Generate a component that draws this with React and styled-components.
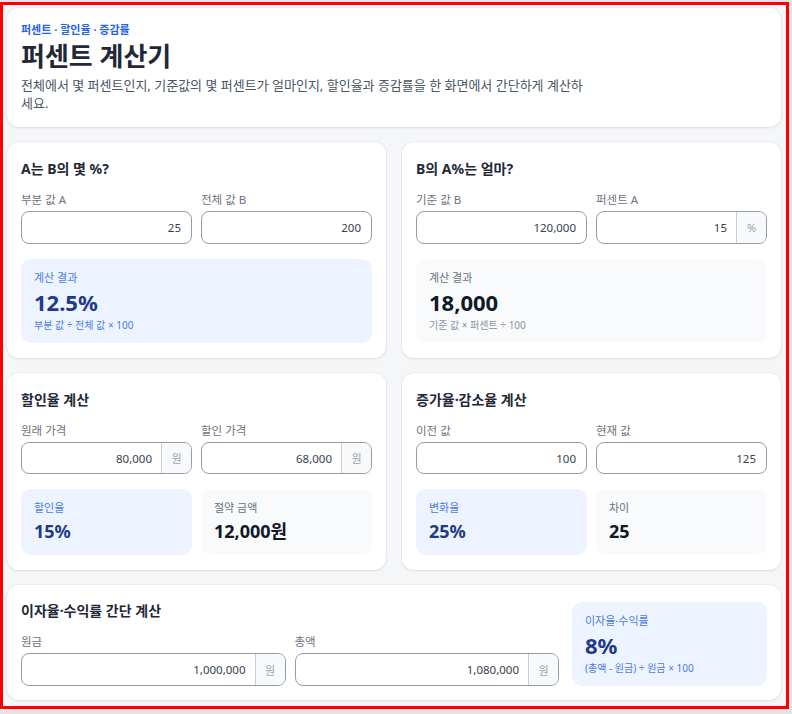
import styled, { createGlobalStyle } from "styled-components";

const GlobalStyle = createGlobalStyle`
  html, body {
    margin: 0;
    padding: 0;
    background: #e4e4e4;
  }
  body {
    font-family: "Noto Sans", "Noto Sans CJK KR", sans-serif;
    color: #1f2937;
  }
  * {
    box-sizing: border-box;
  }
`;

const Frame = styled.div`
  margin-top: 2px;
  width: 789px;
  height: 707px;
  border: 3px solid #ff0000;
  background: #f5f6f8;
  overflow: hidden;
`;

const Page = styled.main`
  display: flex;
  flex-direction: column;
  gap: 15px;
  padding: 3px 5px 5px 4px;
`;

const Card = styled.section`
  min-width: 0;
  background: #ffffff;
  border-radius: 12px;
  box-shadow: 0 1px 3px rgba(15, 23, 42, 0.08), 0 0 0 1px rgba(15, 23, 42, 0.03);
  padding: ${(p) => p.$pad || "17px 14px 15px"};
`;

const Eyebrow = styled.div`
  font-size: 11px;
  line-height: 14px;
  font-weight: 700;
  color: #2563eb;
`;

const Title = styled.h1`
  margin: 2px 0 0;
  font-size: 26px;
  line-height: 34px;
  font-weight: 700;
  color: #1f2937;
`;

const Desc = styled.p`
  margin: 3px 0 0;
  max-width: 568px;
  font-size: 13px;
  line-height: 18px;
  color: #4b5563;
`;

const Row = styled.div`
  display: grid;
  grid-template-columns: minmax(0, 1fr) minmax(0, 1fr);
  gap: 16px;
`;

const CardTitle = styled.h2`
  margin: 0;
  font-size: 14px;
  line-height: 20px;
  font-weight: 700;
  color: #1f2937;
`;

const Fields = styled.div`
  display: grid;
  grid-template-columns: minmax(0, 1fr) minmax(0, 1fr);
  gap: 9px;
  margin-top: 14px;
`;

const Field = styled.label`
  display: flex;
  flex-direction: column;
  gap: 4px;
  min-width: 0;
`;

const Label = styled.span`
  font-size: 11.5px;
  line-height: 14px;
  color: #6b7280;
`;

const InputBox = styled.div`
  display: flex;
  height: ${(p) => p.$h || 33}px;
  border: 1px solid #969ba5;
  border-radius: 8px;
  background: #fff;
  overflow: hidden;
`;

const Input = styled.input`
  flex: 1;
  width: 0;
  min-width: 0;
  border: none;
  outline: none;
  background: transparent;
  text-align: right;
  padding: 0 ${(p) => (p.$addon ? 9 : 10)}px 0 10px;
  font-family: inherit;
  font-size: 11.5px;
  color: #374151;
`;

const Addon = styled.span`
  width: 30px;
  flex: none;
  display: flex;
  align-items: center;
  justify-content: center;
  border-left: 1px solid #c9cdd4;
  background: #f8f9fb;
  font-size: 11px;
  color: #9ca3af;
`;

const Results = styled.div`
  display: grid;
  grid-template-columns: ${(p) =>
    p.$split ? "minmax(0, 1fr) minmax(0, 1fr)" : "minmax(0, 1fr)"};
  gap: 9px;
  margin-top: 15px;
`;

const Result = styled.div`
  min-width: 0;
  border-radius: 10px;
  background: ${(p) => (p.$accent ? "#eef4ff" : "#f8fafc")};
  padding: ${(p) => (p.$small ? "12px 13px" : "12px 13px 11px")};
`;

const ResultLabel = styled.div`
  font-size: 11px;
  line-height: 14px;
  color: ${(p) => (p.$accent ? "#4b7be5" : "#6b7280")};
`;

const ResultValue = styled.div`
  margin-top: 4px;
  font-size: ${(p) => (p.$small ? 18 : 22)}px;
  line-height: ${(p) => (p.$small ? 24 : 26)}px;
  font-weight: 700;
  color: ${(p) => (p.$accent ? "#1e3a8a" : "#111827")};
`;

const Formula = styled.div`
  margin-top: 3px;
  font-size: 10px;
  line-height: 14px;
  color: ${(p) => (p.$accent ? "#4b7be5" : "#8b929c")};
`;

const WideLayout = styled.div`
  display: grid;
  grid-template-columns: minmax(0, 1fr) 195px;
  gap: 13px;
  align-items: end;
`;

function NumberField({ label, value, addon, h }) {
  return (
    <Field>
      <Label>{label}</Label>
      <InputBox $h={h}>
        <Input readOnly defaultValue={value} $addon={!!addon} />
        {addon && <Addon>{addon}</Addon>}
      </InputBox>
    </Field>
  );
}

function ResultBox({ label, value, formula, accent, small }) {
  return (
    <Result $accent={accent} $small={small}>
      <ResultLabel $accent={accent}>{label}</ResultLabel>
      <ResultValue $accent={accent} $small={small}>
        {value}
      </ResultValue>
      {formula && <Formula $accent={accent}>{formula}</Formula>}
    </Result>
  );
}

export default function App() {
  return (
    <>
      <GlobalStyle />
      <Frame>
        <Page>
          <Card $pad="15px 14px 15px">
            <Eyebrow>퍼센트 · 할인율 · 증감률</Eyebrow>
            <Title>퍼센트 계산기</Title>
            <Desc>
              전체에서 몇 퍼센트인지, 기준값의 몇 퍼센트가 얼마인지, 할인율과
              증감률을 한 화면에서 간단하게 계산하세요.
            </Desc>
          </Card>

          <Row>
            <Card>
              <CardTitle>A는 B의 몇 %?</CardTitle>
              <Fields>
                <NumberField label="부분 값 A" value="25" />
                <NumberField label="전체 값 B" value="200" />
              </Fields>
              <Results>
                <ResultBox
                  accent
                  label="계산 결과"
                  value="12.5%"
                  formula="부분 값 ÷ 전체 값 × 100"
                />
              </Results>
            </Card>
            <Card>
              <CardTitle>B의 A%는 얼마?</CardTitle>
              <Fields>
                <NumberField label="기준 값 B" value="120,000" />
                <NumberField label="퍼센트 A" value="15" addon="%" />
              </Fields>
              <Results>
                <ResultBox
                  label="계산 결과"
                  value="18,000"
                  formula="기준 값 × 퍼센트 ÷ 100"
                />
              </Results>
            </Card>
          </Row>

          <Row>
            <Card>
              <CardTitle>할인율 계산</CardTitle>
              <Fields>
                <NumberField label="원래 가격" value="80,000" addon="원" h={32} />
                <NumberField label="할인 가격" value="68,000" addon="원" h={32} />
              </Fields>
              <Results $split>
                <ResultBox accent small label="할인율" value="15%" />
                <ResultBox small label="절약 금액" value="12,000원" />
              </Results>
            </Card>
            <Card>
              <CardTitle>증가율·감소율 계산</CardTitle>
              <Fields>
                <NumberField label="이전 값" value="100" h={32} />
                <NumberField label="현재 값" value="125" h={32} />
              </Fields>
              <Results $split>
                <ResultBox accent small label="변화율" value="25%" />
                <ResultBox small label="차이" value="25" />
              </Results>
            </Card>
          </Row>

          <Card $pad="16px 14px 14px">
            <WideLayout>
              <div>
                <CardTitle>이자율·수익률 간단 계산</CardTitle>
                <Fields>
                  <NumberField label="원금" value="1,000,000" addon="원" />
                  <NumberField label="총액" value="1,080,000" addon="원" />
                </Fields>
              </div>
              <ResultBox
                accent
                label="이자율·수익률"
                value="8%"
                formula="(총액 - 원금) ÷ 원금 × 100"
              />
            </WideLayout>
          </Card>
        </Page>
      </Frame>
    </>
  );
}
